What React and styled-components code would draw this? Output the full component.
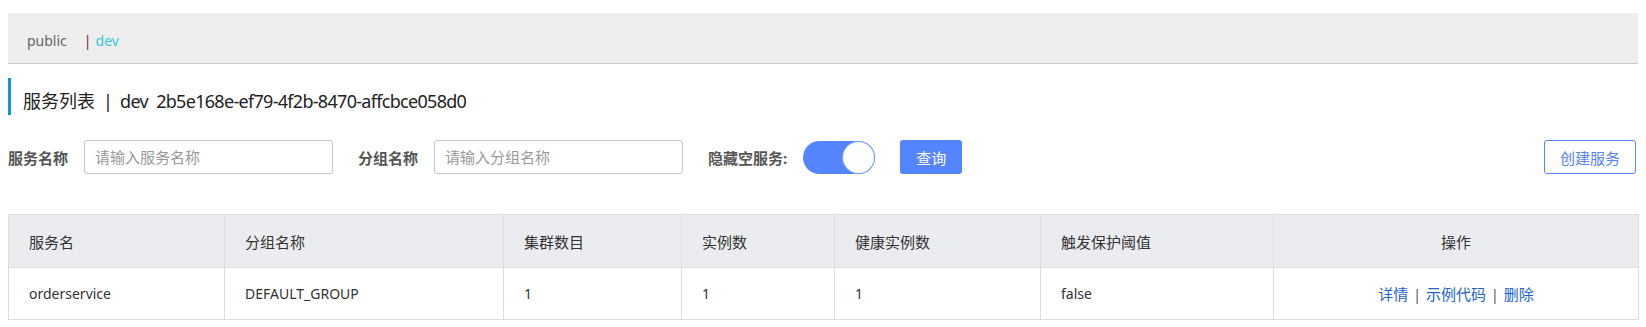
import styled, { createGlobalStyle } from "styled-components";

const GlobalStyle = createGlobalStyle`
  body {
    margin: 0;
    background: #fff;
    font-family: "Noto Sans", "Noto Sans CJK SC", sans-serif;
    color: #333;
  }
`;

const columns = [
  { title: "服务名", width: 216 },
  { title: "分组名称", width: 279 },
  { title: "集群数目", width: 178 },
  { title: "实例数", width: 153 },
  { title: "健康实例数", width: 206 },
  { title: "触发保护阈值", width: 233 },
  { title: "操作", width: 365, center: true },
];

const rows = [
  {
    name: "orderservice",
    group: "DEFAULT_GROUP",
    clusters: 1,
    instances: 1,
    healthy: 1,
    threshold: "false",
  },
];

export default function App() {
  return (
    <Page>
      <GlobalStyle />
      <NamespaceBar>
        <NsItem>public</NsItem>
        <NsDivider>|</NsDivider>
        <NsItem $active>dev</NsItem>
      </NamespaceBar>

      <PageTitle>
        <span>服务列表</span>
        <TitleSep>|</TitleSep>
        <TitleLatin>dev</TitleLatin>
        <TitleId>2b5e168e-ef79-4f2b-8470-affcbce058d0</TitleId>
      </PageTitle>

      <FilterRow>
        <Field>
          <Label>服务名称</Label>
          <TextInput placeholder="请输入服务名称" />
        </Field>
        <Field>
          <Label>分组名称</Label>
          <TextInput placeholder="请输入分组名称" />
        </Field>
        <Field>
          <Label>隐藏空服务:</Label>
          <Switch>
            <Knob />
          </Switch>
        </Field>
        <PrimaryButton>查询</PrimaryButton>
        <Spacer />
        <OutlineButton>创建服务</OutlineButton>
      </FilterRow>

      <Table>
        <colgroup>
          {columns.map((c) => (
            <col key={c.title} style={{ width: c.width }} />
          ))}
        </colgroup>
        <thead>
          <tr>
            {columns.map((c) => (
              <Th key={c.title} $center={c.center}>
                {c.title}
              </Th>
            ))}
          </tr>
        </thead>
        <tbody>
          {rows.map((r) => (
            <tr key={r.name}>
              <Td>{r.name}</Td>
              <Td>{r.group}</Td>
              <Td>{r.clusters}</Td>
              <Td>{r.instances}</Td>
              <Td>{r.healthy}</Td>
              <Td>{r.threshold}</Td>
              <Td $center>
                <Link>详情</Link>
                <LinkSep>|</LinkSep>
                <Link>示例代码</Link>
                <LinkSep>|</LinkSep>
                <Link>删除</Link>
              </Td>
            </tr>
          ))}
        </tbody>
      </Table>
    </Page>
  );
}

const Page = styled.div`
  padding: 13px 8px 0;
`;

const NamespaceBar = styled.div`
  display: flex;
  align-items: center;
  height: 51px;
  padding: 6px 0 0 19px;
  box-sizing: border-box;
  background: #eeeeee;
  border-bottom: 1px solid #cccccc;
  font-size: 14px;
  line-height: 20px;
`;

const NsItem = styled.span`
  color: ${(p) => (p.$active ? "#33c7e0" : "#666")};
`;

const NsDivider = styled.span`
  color: #7a1f14;
  margin: 0 4px 0 17px;
`;

const PageTitle = styled.div`
  margin-top: 14px;
  height: 37px;
  box-sizing: border-box;
  border-left: 3px solid #0a9ad0;
  padding: 11px 0 0 12px;
  font-size: 18px;
  line-height: 24px;
  color: #222;
`;

const TitleSep = styled.span`
  margin: 0 7px 0 8px;
`;

const TitleLatin = styled.span`
  letter-spacing: -0.6px;
`;

const TitleId = styled.span`
  margin-left: 8px;
  letter-spacing: -0.7px;
`;

const FilterRow = styled.div`
  display: flex;
  align-items: center;
  margin-top: 25px;
  height: 34px;
`;

const Field = styled.div`
  display: flex;
  align-items: center;
  gap: 16px;
  margin-right: 25px;
`;

const Label = styled.span`
  font-size: 15px;
  font-weight: bold;
  color: #555;
`;

const TextInput = styled.input`
  width: 249px;
  height: 34px;
  box-sizing: border-box;
  border: 1px solid #c4c6cf;
  border-radius: 3px;
  padding: 0 10px;
  font-size: 15px;
  font-family: inherit;
  outline: none;

  &::placeholder {
    color: #999;
  }
`;

const Switch = styled.div`
  width: 72px;
  height: 33px;
  border-radius: 17px;
  background: #5584ff;
  display: flex;
  justify-content: flex-end;
  align-items: center;
  padding: 1px;
  box-sizing: border-box;
`;

const Knob = styled.div`
  width: 31px;
  height: 31px;
  border-radius: 50%;
  background: #fff;
  box-shadow: 0 0 0 1px #7aa0ff;
`;

const PrimaryButton = styled.button`
  height: 34px;
  width: 62px;
  border: none;
  border-radius: 3px;
  background: #5584ff;
  color: #fff;
  font-size: 15px;
  font-family: inherit;
`;

const Spacer = styled.div`
  flex: 1;
`;

const OutlineButton = styled.button`
  height: 34px;
  width: 92px;
  margin-right: 2px;
  border: 1px solid #5584ff;
  border-radius: 3px;
  background: #fff;
  color: #5584ff;
  font-size: 15px;
  font-family: inherit;
`;

const Table = styled.table`
  width: 100%;
  margin-top: 40px;
  border-collapse: collapse;
  table-layout: fixed;
  font-size: 14px;
`;

const Th = styled.th`
  height: 52px;
  padding: 0 20px;
  background: #ebecf0;
  border: 1px solid #dcdee3;
  font-size: 15px;
  font-weight: normal;
  color: #333;
  text-align: ${(p) => (p.$center ? "center" : "left")};
`;

const Td = styled.td`
  height: 51px;
  padding: 0 20px;
  border: 1px solid #dcdee3;
  color: #333;
  text-align: ${(p) => (p.$center ? "center" : "left")};
`;

const Link = styled.a`
  color: #2164d6;
  font-size: 15px;
  cursor: pointer;
`;

const LinkSep = styled.span`
  color: #555;
  margin: 0 5px;
`;
